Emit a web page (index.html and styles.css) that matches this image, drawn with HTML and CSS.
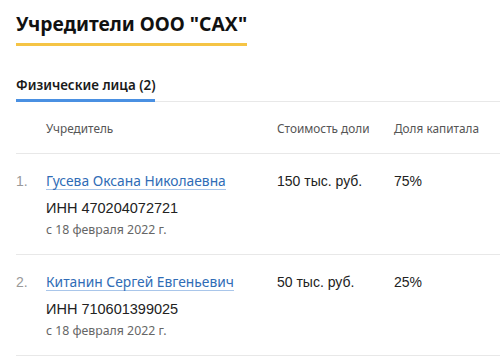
FILE: index.html
```html
<!DOCTYPE html>
<html lang="ru">
<head>
<meta charset="utf-8">
<link rel="stylesheet" href="styles.css">
</head>
<body>
<div class="page">
  <h2 class="title">Учредители ООО "САХ"</h2>
  <div class="tabs">
    <div class="tab">Физические лица (2)</div>
  </div>
  <div class="table">
    <div class="row head">
      <div class="num"></div>
      <div class="c-name">Учредитель</div>
      <div class="c-cost">Стоимость доли</div>
      <div class="c-share">Доля капитала</div>
    </div>
    <div class="row">
      <div class="num">1.</div>
      <div class="c-name">
        <a class="link" href="#">Гусева Оксана Николаевна</a>
        <div class="inn">ИНН 470204072721</div>
        <div class="date">с 18 февраля 2022 г.</div>
      </div>
      <div class="c-cost val">150 тыс. руб.</div>
      <div class="c-share val">75%</div>
    </div>
    <div class="row">
      <div class="num">2.</div>
      <div class="c-name">
        <a class="link" href="#">Китанин Сергей Евгеньевич</a>
        <div class="inn">ИНН 710601399025</div>
        <div class="date">с 18 февраля 2022 г.</div>
      </div>
      <div class="c-cost val">50 тыс. руб.</div>
      <div class="c-share val">25%</div>
    </div>
  </div>
</div>
</body>
</html>
```
FILE: styles.css
```css
html, body {
  margin: 0;
  padding: 0;
  background: #fff;
}
body {
  font-family: "Noto Sans", "Open Sans", sans-serif;
  color: #222;
}
.page {
  padding: 10px 0 0 16px;
}
.title {
  display: inline-block;
  margin: 0;
  font-size: 19.3px;
  font-weight: 700;
  line-height: 28px;
  color: #111;
  padding-bottom: 5px;
  border-bottom: 3px solid #f5c445;
}
.tabs {
  margin-top: 29px;
  border-bottom: 1px solid #e8e8e8;
  display: flex;
}
.tab {
  font-size: 13.4px;
  font-weight: 600;
  line-height: 20px;
  color: #1a1a1a;
  padding-bottom: 4px;
  border-bottom: 3px solid #4a90e2;
  margin-bottom: -1px;
}
.table {
  display: flex;
  flex-direction: column;
}
.row {
  display: grid;
  grid-template-columns: 30px 231px 117px 1fr;
  border-bottom: 1px solid #e8e8e8;
  padding: 19px 0 15px;
}
.row.head {
  padding: 17px 0 16px;
  font-size: 11.8px;
  color: #555;
  line-height: 18px;
}
.num {
  font-family: "Liberation Sans", Arial, sans-serif;
  font-size: 14px;
  color: #999;
  line-height: 16px;
}
.link {
  display: block;
  width: fit-content;
  font-size: 13.8px;
  line-height: 16px;
  color: #2f6cb6;
  text-decoration: none;
  border-bottom: 1px solid #a9c6ea;
}
.inn {
  font-family: "Liberation Sans", Arial, sans-serif;
  font-size: 14.5px;
  line-height: 20px;
  color: #222;
  margin-top: 8px;
}
.date {
  font-size: 12.3px;
  line-height: 18px;
  color: #666;
  margin-top: 3px;
}
.val {
  font-family: "Liberation Sans", Arial, sans-serif;
  font-size: 14px;
  line-height: 16px;
  color: #222;
}
```
